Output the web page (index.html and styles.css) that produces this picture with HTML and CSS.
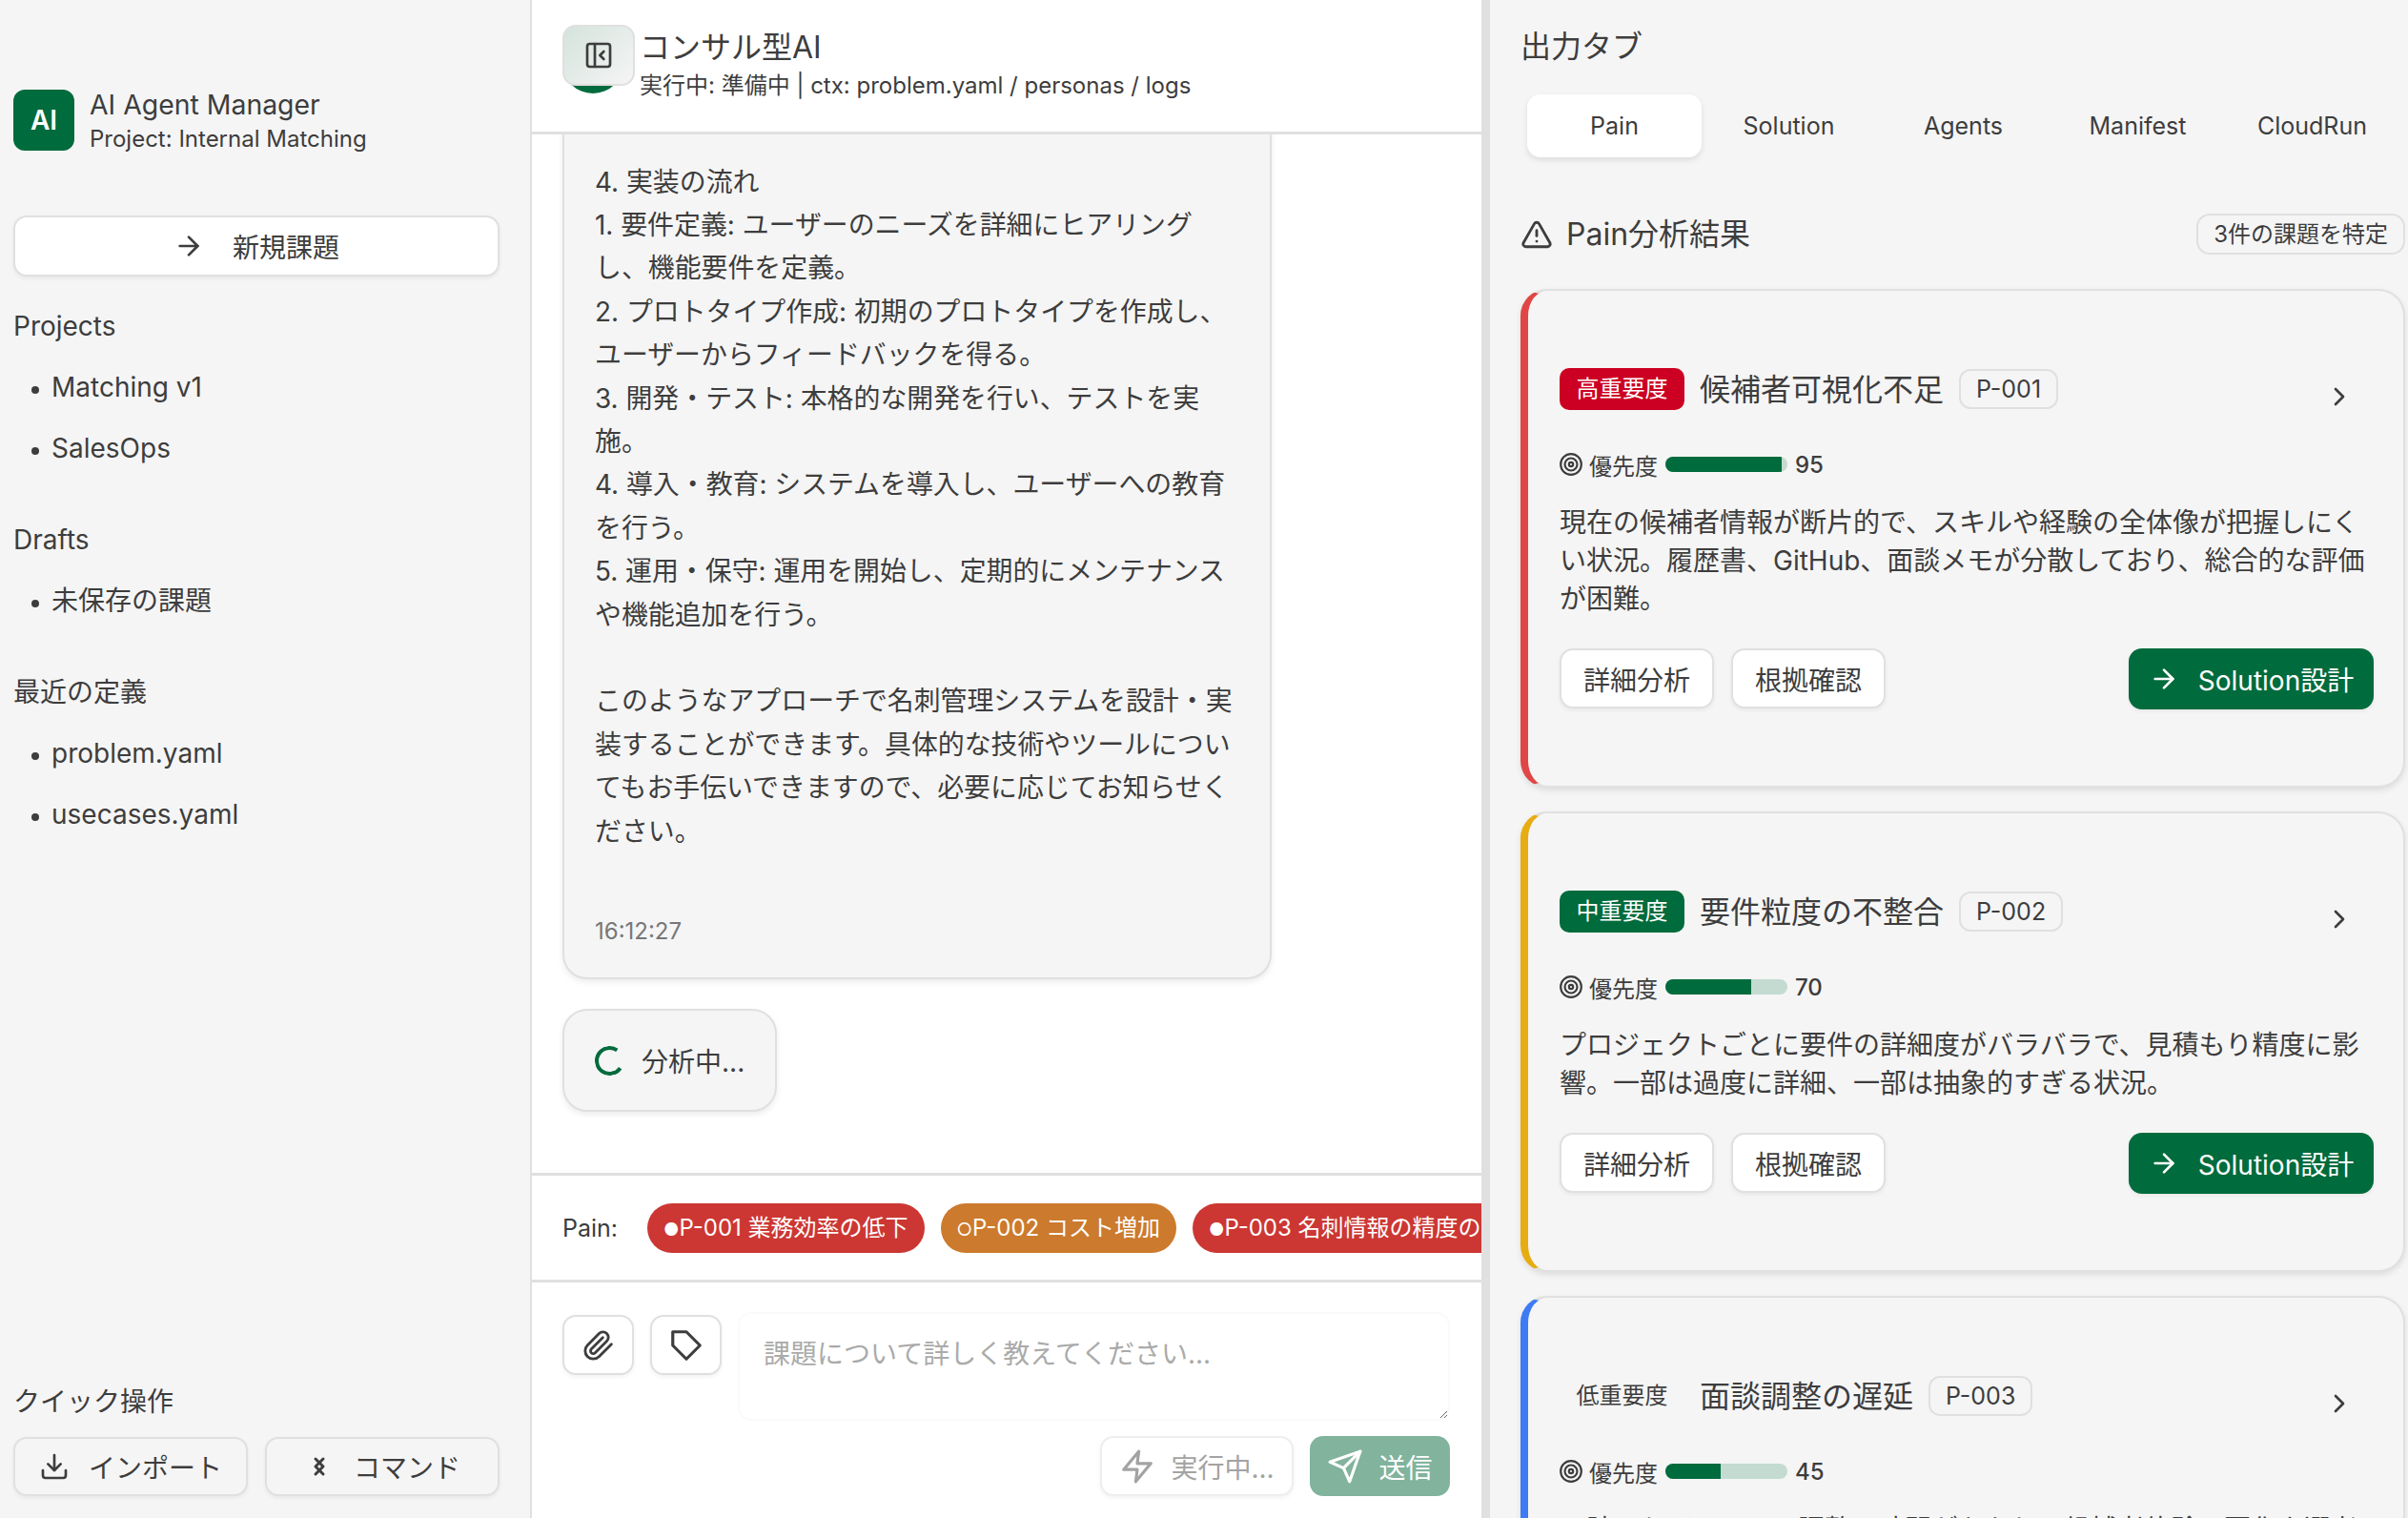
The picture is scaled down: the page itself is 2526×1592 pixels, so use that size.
FILE: index.html
```html
<!DOCTYPE html>
<html lang="ja">
<head>
    <meta charset="UTF-8">
    <title>AI Agent Manager</title>
    <link rel="stylesheet" href="styles.css">
</head>
<body>
<div class="app">
    <aside class="sidebar">
        <div class="brand">
            <div class="brand-logo">AI</div>
            <div class="brand-text">
                <div class="brand-title">AI Agent Manager</div>
                <div class="brand-sub">Project: Internal Matching</div>
            </div>
        </div>
        <button class="btn new-btn">
            <svg class="icon" viewBox="0 0 24 24"><path d="M5 12h14"/><path d="m12 5 7 7-7 7"/></svg>
            新規課題
        </button>
        <div class="nav-section">
            <div class="nav-label">Projects</div>
            <div class="nav-item">Matching v1</div>
            <div class="nav-item">SalesOps</div>
        </div>
        <div class="nav-section">
            <div class="nav-label">Drafts</div>
            <div class="nav-item">未保存の課題</div>
        </div>
        <div class="nav-section">
            <div class="nav-label">最近の定義</div>
            <div class="nav-item">problem.yaml</div>
            <div class="nav-item">usecases.yaml</div>
        </div>
        <div class="quick">
            <div class="quick-label">クイック操作</div>
            <div class="quick-btns">
                <button class="btn quick-btn">
                    <svg class="icon" viewBox="0 0 24 24"><path d="M21 15v4a2 2 0 0 1-2 2H5a2 2 0 0 1-2-2v-4"/><path d="m7 10 5 5 5-5"/><path d="M12 15V3"/></svg>
                    インポート
                </button>
                <button class="btn quick-btn">
                    <svg class="icon icon-cmd" viewBox="0 0 32 32"><path d="M12 8 20 16 12 24"/><path d="M20 8 12 16l8 8"/></svg>
                    コマンド
                </button>
            </div>
        </div>
    </aside>

    <main class="main">
        <header class="main-head">
            <div class="avatar"></div>
            <button class="toggle">
                <svg class="icon" viewBox="0 0 24 24"><rect x="3" y="3" width="18" height="18" rx="2"/><path d="M9 3v18"/><path d="m16 15-3-3 3-3"/></svg>
            </button>
            <div>
                <div class="head-title">コンサル型AI</div>
                <div class="head-sub">実行中: 準備中 | ctx: problem.yaml / personas / logs</div>
            </div>
        </header>

        <div class="messages">
            <div class="bubble msg">
                <div class="msg-text">4. 実装の流れ
1. 要件定義: ユーザーのニーズを詳細にヒアリング
し、機能要件を定義。
2. プロトタイプ作成: 初期のプロトタイプを作成し、
ユーザーからフィードバックを得る。
3. 開発・テスト: 本格的な開発を行い、テストを実
施。
4. 導入・教育: システムを導入し、ユーザーへの教育
を行う。
5. 運用・保守: 運用を開始し、定期的にメンテナンス
や機能追加を行う。

このようなアプローチで名刺管理システムを設計・実
装することができます。具体的な技術やツールについ
てもお手伝いできますので、必要に応じてお知らせく
ださい。</div>
                <div class="msg-time">16:12:27</div>
            </div>
            <div class="bubble loading">
                <span class="spinner"></span>
                分析中...
            </div>
        </div>

        <div class="pain-row">
            <span class="pain-label">Pain:</span>
            <span class="chip chip-red"><span class="chip-dot">●</span>P-001 業務効率の低下</span>
            <span class="chip chip-orange"><span class="chip-dot">○</span>P-002 コスト増加</span>
            <span class="chip chip-red"><span class="chip-dot">●</span>P-003 名刺情報の精度の問題</span>
        </div>

        <div class="composer">
            <div class="composer-top">
                <button class="btn square-btn">
                    <svg class="icon-clip" viewBox="0 0 24 24"><path d="m21.44 11.05-9.19 9.19a6 6 0 0 1-8.49-8.49l8.57-8.57A4 4 0 1 1 18 8.84l-8.59 8.57a2 2 0 0 1-2.83-2.83l8.49-8.48"/></svg>
                </button>
                <button class="btn square-btn">
                    <svg class="icon-tag" viewBox="0 0 24 24"><path d="M3 3h9l9 9-9 9-9-9z"/></svg>
                </button>
                <textarea class="input" placeholder="課題について詳しく教えてください..."></textarea>
            </div>
            <div class="composer-actions">
                <button class="btn run-btn">
                    <svg class="icon-tag" viewBox="0 0 24 24"><path d="M13 2 3 14h9l-1 8 10-12h-9l1-8z"/></svg>
                    実行中...
                </button>
                <button class="btn send-btn">
                    <svg class="icon-tag" viewBox="0 0 24 24"><path d="m22 2-7 20-4-9-9-4Z"/><path d="M22 2 11 13"/></svg>
                    送信
                </button>
            </div>
        </div>
    </main>

    <div class="resizer"></div>

    <section class="output">
        <div class="output-title">出力タブ</div>
        <div class="tabs">
            <div class="tab tab-active">Pain</div>
            <div class="tab">Solution</div>
            <div class="tab">Agents</div>
            <div class="tab">Manifest</div>
            <div class="tab">CloudRun</div>
        </div>
        <div class="result-head">
            <svg class="icon-lg" viewBox="0 0 24 24"><path d="m21.73 18-8-14a2 2 0 0 0-3.48 0l-8 14A2 2 0 0 0 4 21h16a2 2 0 0 0 1.73-3"/><path d="M12 9v4"/><path d="M12 17h.01"/></svg>
            <div class="result-title">Pain分析結果</div>
            <div class="result-count">3件の課題を特定</div>
        </div>

        <article class="card card-red">
            <div class="card-head">
                <span class="sev sev-high">高重要度</span>
                <span class="card-title">候補者可視化不足</span>
                <span class="pid">P-001</span>
                <svg class="chevron" viewBox="0 0 24 24"><path d="m9 18 6-6-6-6"/></svg>
            </div>
            <div class="prio">
                <svg class="icon-sm" viewBox="0 0 24 24"><circle cx="12" cy="12" r="10"/><circle cx="12" cy="12" r="6"/><circle cx="12" cy="12" r="2"/></svg>
                優先度
                <div class="bar"><div class="bar-fill" style="width: 95%"></div></div>
                <span class="prio-num">95</span>
            </div>
            <p class="card-desc">現在の候補者情報が断片的で、スキルや経験の全体像が把握しにくい状況。履歴書、GitHub、面談メモが分散しており、総合的な評価が困難。</p>
            <div class="card-actions">
                <button class="btn card-btn">詳細分析</button>
                <button class="btn card-btn">根拠確認</button>
                <button class="btn solution-btn">
                    <svg class="icon" viewBox="0 0 24 24"><path d="M5 12h14"/><path d="m12 5 7 7-7 7"/></svg>
                    Solution設計
                </button>
            </div>
        </article>

        <article class="card card-yellow">
            <div class="card-head">
                <span class="sev sev-mid">中重要度</span>
                <span class="card-title">要件粒度の不整合</span>
                <span class="pid">P-002</span>
                <svg class="chevron" viewBox="0 0 24 24"><path d="m9 18 6-6-6-6"/></svg>
            </div>
            <div class="prio">
                <svg class="icon-sm" viewBox="0 0 24 24"><circle cx="12" cy="12" r="10"/><circle cx="12" cy="12" r="6"/><circle cx="12" cy="12" r="2"/></svg>
                優先度
                <div class="bar"><div class="bar-fill" style="width: 70%"></div></div>
                <span class="prio-num">70</span>
            </div>
            <p class="card-desc">プロジェクトごとに要件の詳細度がバラバラで、見積もり精度に影響。一部は過度に詳細、一部は抽象的すぎる状況。</p>
            <div class="card-actions">
                <button class="btn card-btn">詳細分析</button>
                <button class="btn card-btn">根拠確認</button>
                <button class="btn solution-btn">
                    <svg class="icon" viewBox="0 0 24 24"><path d="M5 12h14"/><path d="m12 5 7 7-7 7"/></svg>
                    Solution設計
                </button>
            </div>
        </article>

        <article class="card card-blue">
            <div class="card-head">
                <span class="sev sev-low">低重要度</span>
                <span class="card-title">面談調整の遅延</span>
                <span class="pid">P-003</span>
                <svg class="chevron" viewBox="0 0 24 24"><path d="m9 18 6-6-6-6"/></svg>
            </div>
            <div class="prio">
                <svg class="icon-sm" viewBox="0 0 24 24"><circle cx="12" cy="12" r="10"/><circle cx="12" cy="12" r="6"/><circle cx="12" cy="12" r="2"/></svg>
                優先度
                <div class="bar"><div class="bar-fill" style="width: 45%"></div></div>
                <span class="prio-num">45</span>
            </div>
            <p class="card-desc">面談スケジュールの調整に時間がかかり、候補者体験の悪化や選考期間の長期化を招いている。</p>
        </article>
    </section>
</div>
</body>
</html>
```

FILE: styles.css
```css
*{
    box-sizing: border-box;
}
html, body{
    margin: 0;
    height: 100%;
    overflow: hidden;
}
body{
    font-family: Inter, "Noto Sans CJK JP", sans-serif;
    font-size: 28px;
    color: #3d3d3d;
    background: #fff;
}
button{
    font: inherit;
    color: inherit;
}
svg{
    fill: none;
    stroke: currentColor;
    stroke-width: 2;
    stroke-linecap: round;
    stroke-linejoin: round;
    flex-shrink: 0;
}
.icon{
    width: 32px;
    height: 32px;
}
.icon-lg{
    width: 34px;
    height: 34px;
}
.icon-sm{
    width: 26px;
    height: 26px;
    margin-left: -1px;
    margin-right: -2px;
}
.icon-cmd{
    stroke-width: 3;
}
.icon-clip{
    width: 34px;
    height: 34px;
}
.icon-tag{
    width: 38px;
    height: 38px;
}
.app{
    display: flex;
    height: 100vh;
    overflow: hidden;
}
.btn{
    display: flex;
    align-items: center;
    justify-content: center;
    background: #fff;
    border: 2px solid #e0e0e0;
    border-radius: 14px;
    box-shadow: 0 2px 4px rgba(0, 0, 0, 0.06);
    cursor: pointer;
}

/* sidebar */
.sidebar{
    width: 558px;
    flex-shrink: 0;
    display: flex;
    flex-direction: column;
    padding: 90px 32px 23px 14px;
    background: #f5f5f5;
    border-right: 2px solid #e0e0e0;
}
.brand{
    display: flex;
    align-items: center;
    gap: 16px;
    height: 72px;
    margin-bottom: 64px;
}
.brand-logo{
    width: 64px;
    height: 64px;
    display: flex;
    align-items: center;
    justify-content: center;
    border-radius: 12px;
    background: #006b3c;
    color: #fff;
    font-weight: 600;
}
.brand-text{
    padding-top: 3px;
}
.brand-title{
    font-size: 28.4px;
    line-height: 36px;
}
.brand-sub{
    font-size: 24px;
    line-height: 36px;
}
.new-btn{
    height: 64px;
    flex-shrink: 0;
    gap: 30px;
    margin-bottom: 20px;
}
.nav-section{
    margin-bottom: 32px;
}
.nav-label, .nav-item{
    height: 64px;
    line-height: 64px;
}
.nav-item{
    padding-left: 40px;
    position: relative;
}
.nav-item::before{
    content: "";
    position: absolute;
    left: 19px;
    top: 31px;
    width: 8px;
    height: 8px;
    border-radius: 50%;
    background: #3d3d3d;
}
.quick{
    margin-top: auto;
}
.quick-label{
    line-height: 40px;
    margin-bottom: 17px;
}
.quick-btns{
    display: grid;
    grid-template-columns: 1fr 1fr;
    gap: 18px;
}
.quick-btn{
    height: 62px;
    gap: 20px;
    background: #f5f5f5;
}

/* main column */
.main{
    width: 996px;
    flex-shrink: 0;
    display: flex;
    flex-direction: column;
    background: #fff;
}
.main-head{
    position: relative;
    height: 141px;
    flex-shrink: 0;
    display: flex;
    align-items: flex-start;
    gap: 17px;
    padding: 0 32px;
    border-bottom: 3px solid #e0e0e0;
}
.avatar{
    width: 64px;
    height: 64px;
    margin-top: 34px;
    border-radius: 50%;
    background: #006b3c;
}
.toggle{
    position: absolute;
    left: 32px;
    top: 26px;
    width: 76px;
    height: 64px;
    display: flex;
    align-items: center;
    justify-content: center;
    border: 2px solid #e0e0e0;
    border-radius: 14px;
    background: linear-gradient(135deg, #d5e3dc, #f5f5f5);
}
.head-title{
    margin-top: 30px;
    font-size: 32px;
    line-height: 40px;
}
.head-sub{
    font-size: 24px;
    line-height: 40px;
}
.messages{
    flex: 1;
    min-height: 0;
    overflow: hidden;
    display: flex;
    flex-direction: column;
    justify-content: flex-end;
    align-items: flex-start;
    gap: 31px;
    padding: 0 32px 64px;
}
.bubble{
    flex-shrink: 0;
    background: #f5f5f5;
    border: 2px solid #e0e0e0;
    border-radius: 26px;
    box-shadow: 0 3px 6px rgba(0, 0, 0, 0.08);
}
.msg{
    width: 744px;
    padding: 60px 32px 32px;
}
.msg-text{
    white-space: pre-line;
    font-size: 27.9px;
    line-height: 45.4px;
}
.msg-time{
    margin-top: 66px;
    font-size: 24px;
    line-height: 32px;
    color: #777;
}
.loading{
    height: 108px;
    display: flex;
    align-items: center;
    gap: 18px;
    padding: 0 32px;
}
.spinner{
    width: 31px;
    height: 31px;
    border: 4px solid #006b3c;
    border-right-color: transparent;
    border-radius: 50%;
    transform: rotate(-10deg);
}
.pain-row{
    height: 115px;
    flex-shrink: 0;
    display: flex;
    align-items: center;
    gap: 17px;
    padding-left: 32px;
    overflow: hidden;
    border-top: 3px solid #e0e0e0;
    border-bottom: 3px solid #e0e0e0;
}
.pain-label{
    font-size: 25px;
    margin-right: 14px;
}
.chip{
    flex-shrink: 0;
    height: 52px;
    line-height: 52px;
    padding: 0 17px;
    border-radius: 26px;
    color: #fff;
    font-size: 24px;
    white-space: nowrap;
}
.chip-dot{
    font-size: 18px;
}
.chip-red{
    background: #cc3733;
}
.chip-orange{
    background: #cc7a2d;
}
.composer{
    flex-shrink: 0;
    height: 247px;
    padding: 31px 33px 0 32px;
}
.composer-top{
    display: flex;
    align-items: flex-start;
    gap: 17px;
}
.square-btn{
    width: 75px;
    height: 63px;
    margin-top: 3px;
    flex-shrink: 0;
}
.input{
    flex: 1;
    height: 114px;
    padding: 22px 25px;
    font: inherit;
    color: #3d3d3d;
    line-height: 40px;
    border: 2px solid #fafafa;
    border-radius: 14px;
    background: #fff;
    outline: none;
}
.input::placeholder{
    color: #aaa;
}
.composer-actions{
    display: flex;
    justify-content: flex-end;
    gap: 17px;
    margin-top: 16px;
}
.run-btn{
    width: 203px;
    height: 63px;
    gap: 16px;
    color: #a3a3a3;
    border-color: #eee;
}
.send-btn{
    width: 147px;
    height: 63px;
    gap: 16px;
    color: #fff;
    background: #81b39d;
    border: 0;
    box-shadow: none;
}

/* output panel */
.resizer{
    width: 9px;
    flex-shrink: 0;
    background: #e0e0e0;
}
.output{
    flex: 1;
    min-width: 0;
    overflow: hidden;
    padding: 29px 3px 0 32px;
    background: #f5f5f5;
}
.output-title{
    font-size: 32px;
    line-height: 40px;
    margin-bottom: 30px;
}
.tabs{
    display: flex;
    margin-left: 7px;
    margin-bottom: 59px;
}
.tab{
    width: 183px;
    height: 66px;
    line-height: 66px;
    text-align: center;
    font-size: 25px;
    border-radius: 14px;
}
.tab-active{
    background: #fff;
    box-shadow: 0 3px 6px rgba(0, 0, 0, 0.1);
}
.result-head{
    display: flex;
    align-items: center;
    gap: 14px;
    height: 43px;
    margin-bottom: 36px;
}
.result-title{
    font-size: 32px;
    padding-bottom: 5px;
}
.result-count{
    margin-left: auto;
    height: 43px;
    line-height: 39px;
    padding: 0 16px;
    font-size: 24px;
    border: 2px solid #e0e0e0;
    border-radius: 14px;
}
.card{
    padding: 81px 31px 80px 33px;
    margin-bottom: 25px;
    background: #f5f5f5;
    border: 2px solid #e0e0e0;
    border-left-width: 8px;
    border-radius: 28px;
    box-shadow: 0 3px 6px rgba(0, 0, 0, 0.1);
}
.card-red{
    border-left-color: #e04646;
}
.card-yellow{
    border-left-color: #e6ac12;
}
.card-blue{
    border-left-color: #3f7af5;
}
.card-head{
    display: flex;
    align-items: center;
    height: 44px;
    gap: 16px;
}
.sev{
    width: 131px;
    height: 44px;
    line-height: 44px;
    text-align: center;
    font-size: 24px;
    border-radius: 10px;
}
.sev-high{
    background: #cc0022;
    color: #fff;
}
.sev-mid{
    background: #006b3c;
    color: #fff;
}
.card-title{
    font-size: 32px;
    padding-bottom: 5px;
}
.pid{
    height: 42px;
    line-height: 38px;
    padding: 0 16px;
    font-size: 25px;
    border: 2px solid #e0e0e0;
    border-radius: 12px;
}
.chevron{
    width: 32px;
    height: 32px;
    margin-left: auto;
    margin-right: 20px;
    margin-top: 16px;
}
.prio{
    display: flex;
    align-items: center;
    gap: 8px;
    height: 32px;
    margin-top: 41px;
    font-size: 24px;
}
.bar{
    width: 128px;
    height: 16px;
    border-radius: 8px;
    background: #c3dbd1;
    overflow: hidden;
}
.bar-fill{
    height: 100%;
    background: #006b3c;
}
.prio-num{
    font-size: 24px;
    font-weight: 500;
}
.card-desc{
    margin: 25px 0 32px;
    line-height: 40px;
}
.card-actions{
    display: flex;
    align-items: flex-start;
    gap: 18px;
}
.card-btn{
    width: 162px;
    height: 63px;
}
.solution-btn{
    width: 257px;
    height: 64px;
    margin-left: auto;
    gap: 20px;
    color: #fff;
    background: #006b3c;
    border: 0;
}
```
